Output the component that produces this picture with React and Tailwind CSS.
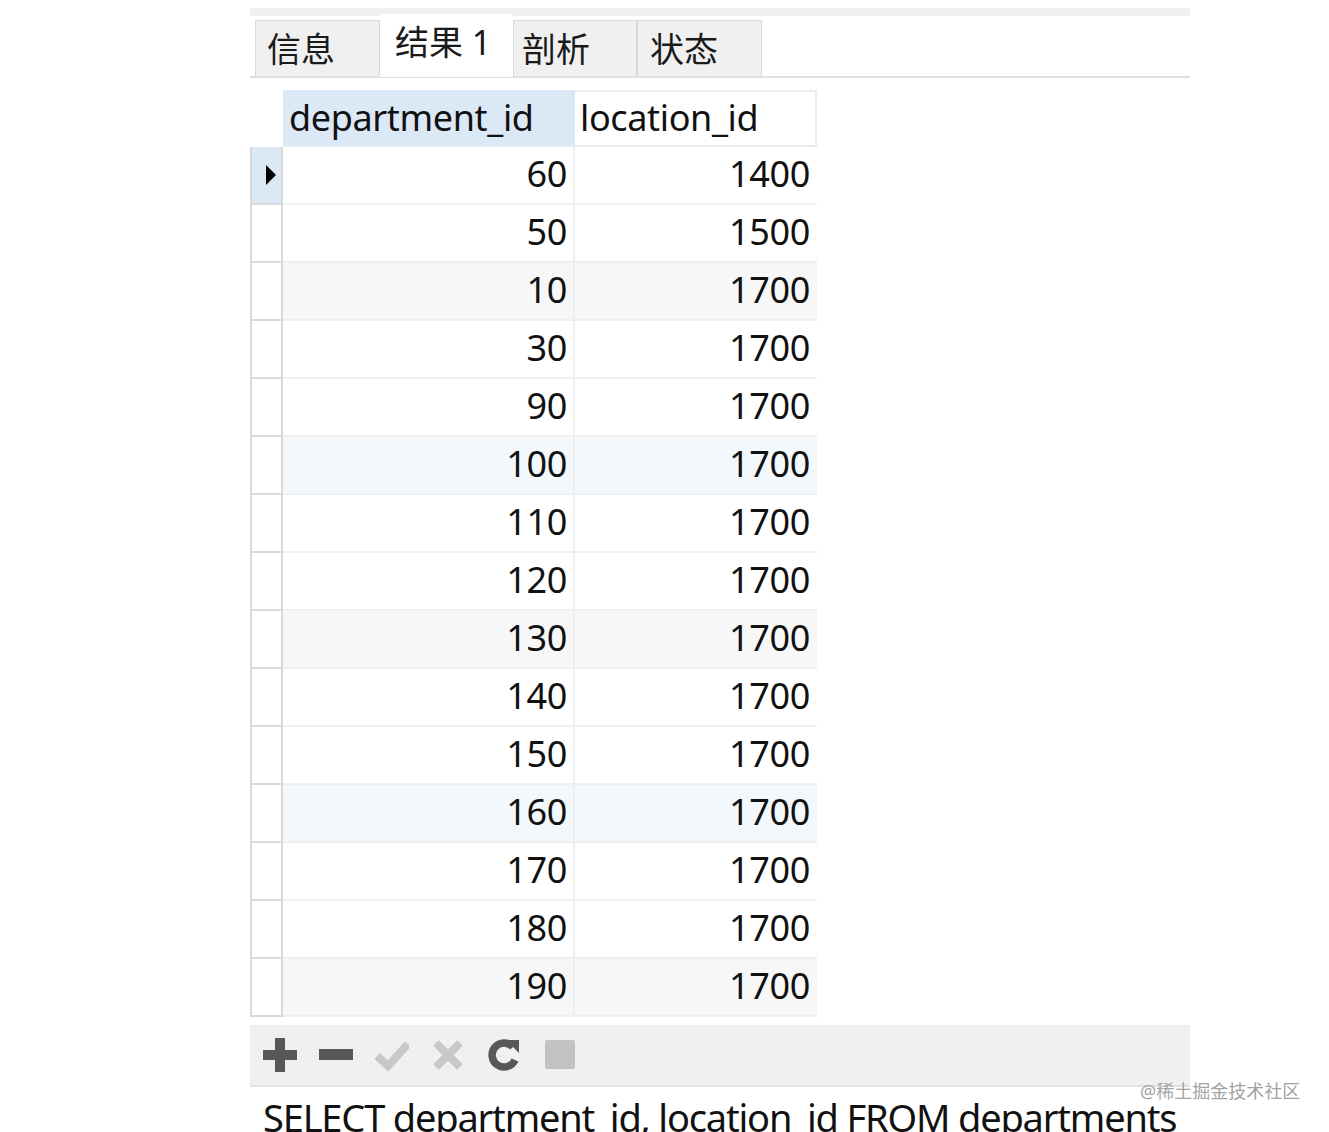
import React from 'react';

const FONT = { fontFamily: '"Noto Sans", "Noto Sans CJK SC", sans-serif' };

const rows = [
  [60, 1400], [50, 1500], [10, 1700], [30, 1700], [90, 1700],
  [100, 1700], [110, 1700], [120, 1700], [130, 1700], [140, 1700],
  [150, 1700], [160, 1700], [170, 1700], [180, 1700], [190, 1700],
];

// row tint that shows in the capture: grey / blue every third row
const rowBg = (i) => {
  if (i % 6 === 2) return 'bg-[#f7f7f7]';
  if (i % 6 === 5) return 'bg-[#f3f8fd]';
  return 'bg-white';
};

function Tab({ label, active }) {
  if (active) {
    return (
      <div className="w-[133px] h-[63px] -mb-px bg-white pl-[15px] pt-[6px] text-[34px] leading-[44px] text-[#1a1a1a]">
        {label}
      </div>
    );
  }
  return (
    <div className="h-[56px] bg-[#f0f0f0] border border-b-0 border-[#d9d9d9] text-[34px] leading-[56px] text-[#1a1a1a]">
      {label}
    </div>
  );
}

function Toolbar() {
  return (
    <div className="h-[62px] bg-[#f0f0f0] border-b-2 border-[#e2e2e2] flex items-center pl-[13px] gap-[22px]">
      <svg width="34" height="34" viewBox="0 0 34 34">
        <rect x="12" y="0" width="10" height="34" fill="#585858" />
        <rect x="0" y="12" width="34" height="10" fill="#585858" />
      </svg>
      <svg width="34" height="34" viewBox="0 0 34 34">
        <rect x="0" y="11" width="34" height="11" fill="#585858" />
      </svg>
      <svg width="34" height="34" viewBox="0 0 34 34">
        <path d="M2 18 L13 28 L33 6" fill="none" stroke="#c8c8c8" strokeWidth="8" strokeLinejoin="miter" />
      </svg>
      <svg width="34" height="34" viewBox="0 0 34 34">
        <path d="M5 5 L29 29 M29 5 L5 29" fill="none" stroke="#c8c8c8" strokeWidth="8" />
      </svg>
      <svg width="34" height="34" viewBox="0 0 34 34">
        <path d="M26 9 A12 12 0 1 0 28 22" fill="none" stroke="#585858" strokeWidth="7.5" />
        <path d="M19 2 L32 2 L32 15 Z" fill="#585858" />
      </svg>
      <svg width="34" height="34" viewBox="0 0 34 34">
        <rect x="2" y="2" width="30" height="29" rx="2" fill="#c2c2c2" />
      </svg>
    </div>
  );
}

export default function App() {
  return (
    <div className="relative h-[1132px] overflow-hidden bg-white" style={FONT}>
      <div className="ml-[250px] w-[940px] pt-[8px]">
        <div className="h-[8px] bg-[#efefef]" />

        {/* tabs */}
        <div className="h-[62px] flex items-end pl-[5px] border-b-2 border-[#e0e0e0]">
          <div className="w-[125px]"><Tab label={<span className="pl-[11px]">信息</span>} /></div>
          <Tab label="结果 1" active />
          <div className="w-[124px]"><Tab label={<span className="pl-[8px]">剖析</span>} /></div>
          <div className="w-[125px]"><Tab label={<span className="pl-[12px]">状态</span>} /></div>
        </div>

        {/* grid */}
        <div className="mt-[12px] w-[567px] text-[36px] text-[#111] tracking-[-0.01em]">
          <div className="flex h-[57px]">
            <div className="w-[33px]" />
            <div className="w-[292px] bg-[#dbe9f7] border-b-2 border-[#e4ecf4] pl-[6px] leading-[55px]">department_id</div>
            <div className="w-[242px] border-b-2 border-r-2 border-t-2 border-[#ececec] pl-[5px] leading-[51px]">location_id</div>
          </div>
          {rows.map(([dep, loc], i) => (
            <div key={i} className="flex h-[58px]">
              <div
                className={`w-[33px] border-l-2 border-r-2 border-b-2 border-[#d9d9d9] flex items-center justify-end pr-[5px] ${
                  i === 0 ? 'bg-[#dbe9f7]' : 'bg-white'
                }`}
              >
                {i === 0 && (
                  <svg width="10" height="20" viewBox="0 0 10 20">
                    <path d="M0 0 L10 10 L0 20 Z" fill="#000" />
                  </svg>
                )}
              </div>
              <div className={`w-[292px] border-b-2 border-r-2 border-[#efefef] text-right pr-[6px] leading-[54px] ${rowBg(i)}`}>
                {dep}
              </div>
              <div className={`w-[242px] border-b-2 border-[#efefef] text-right pr-[7px] leading-[54px] ${rowBg(i)}`}>
                {loc}
              </div>
            </div>
          ))}
        </div>

        <div className="h-[8px]" />
        <Toolbar />

        <div className="pl-[13px] pt-[11px] text-[38px] leading-[38px] tracking-[-0.031em] text-[#111] whitespace-nowrap">
          SELECT department_id, location_id FROM departments
        </div>
      </div>

      <div className="absolute left-[1140px] top-[1081px] text-[18px] leading-[20px] text-[#a3a3a3]">
        @稀土掘金技术社区
      </div>
    </div>
  );
}
